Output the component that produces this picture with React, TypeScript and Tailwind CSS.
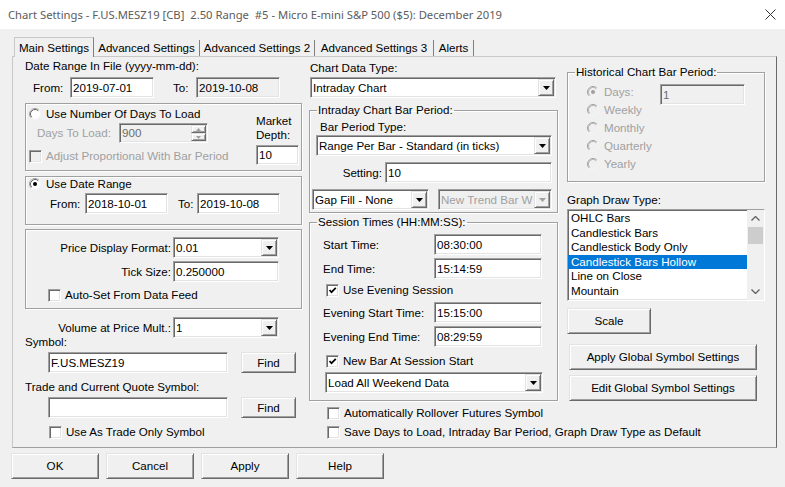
import React from 'react';

const sunken =
  'border border-t-[#a0a0a0] border-l-[#a0a0a0] border-r-white border-b-white shadow-[inset_1px_1px_0_#696969,inset_-1px_-1px_0_#e3e3e3]';
const raised =
  'border border-t-[#e3e3e3] border-l-[#e3e3e3] border-r-[#696969] border-b-[#696969] shadow-[inset_1px_1px_0_#ffffff,inset_-1px_-1px_0_#a0a0a0]';
const etched = 'border border-[#a0a0a0] shadow-[inset_1px_1px_0_#ffffff,1px_1px_0_#ffffff]';

const TextBox: React.FC<{ value?: string; className?: string; gray?: boolean; dim?: boolean }> = ({
  value = '',
  className = '',
  gray = false,
  dim = false,
}) => (
  <div
    className={`${sunken} ${gray ? 'bg-[#f0f0f0]' : 'bg-white'} ${dim ? 'text-[#6d6d6d]' : ''} flex items-center pl-[2px] shrink-0 whitespace-nowrap overflow-hidden ${className}`}
  >
    {value}
  </div>
);

const Arrow: React.FC<{ gray?: boolean }> = ({ gray }) => (
  <svg width="7" height="4" viewBox="0 0 7 4">
    <path d="M0 0 H7 L3.5 4 Z" fill={gray ? '#a0a0a0' : '#000000'} />
  </svg>
);

const Combo: React.FC<{ value: string; className?: string; disabled?: boolean }> = ({
  value,
  className = '',
  disabled = false,
}) => (
  <div
    className={`${sunken} ${disabled ? 'bg-[#f0f0f0] text-[#a0a0a0]' : 'bg-white'} flex items-stretch p-[1px] shrink-0 ${className}`}
  >
    <div className="flex-1 flex items-center pl-[1px] whitespace-nowrap overflow-hidden">{value}</div>
    <div className={`w-[16px] shrink-0 bg-[#f0f0f0] ${raised} flex items-center justify-center`}>
      <Arrow gray={disabled} />
    </div>
  </div>
);

const Btn: React.FC<{ label: string; className?: string }> = ({ label, className = '' }) => (
  <div className={`${raised} bg-[#f0f0f0] flex items-center justify-center shrink-0 whitespace-nowrap ${className}`}>
    {label}
  </div>
);

const Check: React.FC<{ label: string; checked?: boolean; disabled?: boolean; className?: string }> = ({
  label,
  checked = false,
  disabled = false,
  className = '',
}) => (
  <div className={`flex items-center h-[14px] ${className}`}>
    <div
      className={`w-[13px] h-[13px] shrink-0 ${sunken} ${disabled ? 'bg-[#f0f0f0]' : 'bg-white'} flex items-center justify-center`}
    >
      {checked && (
        <svg width="9" height="9" viewBox="0 0 9 9">
          <path d="M1.5 4 L3.5 6.2 L7.8 1.8" stroke="#000000" strokeWidth="1.7" fill="none" />
        </svg>
      )}
    </div>
    <span className={`ml-[4px] whitespace-nowrap ${disabled ? 'text-[#a0a0a0]' : ''}`}>{label}</span>
  </div>
);

const Radio: React.FC<{ label: string; checked?: boolean; disabled?: boolean; className?: string }> = ({
  label,
  checked = false,
  disabled = false,
  className = '',
}) => (
  <div className={`flex items-center ${className}`}>
    <svg width="12" height="12" viewBox="0 0 12 12" className="shrink-0">
      <circle cx="6" cy="6" r="5.5" fill={disabled ? '#f0f0f0' : '#ffffff'} />
      <path d="M2.11 9.89 A5.5 5.5 0 0 1 9.89 2.11" stroke="#a0a0a0" fill="none" />
      <path d="M9.89 2.11 A5.5 5.5 0 0 1 2.11 9.89" stroke="#f4f4f4" fill="none" />
      <path d="M2.82 9.18 A4.5 4.5 0 0 1 9.18 2.82" stroke={disabled ? '#b8b8b8' : '#696969'} fill="none" />
      {checked && <circle cx="6" cy="6" r="2" fill={disabled ? '#a0a0a0' : '#000000'} />}
    </svg>
    <span className={`ml-[5px] whitespace-nowrap ${disabled ? 'text-[#a0a0a0]' : ''}`}>{label}</span>
  </div>
);

const Chevron: React.FC<{ down?: boolean }> = ({ down }) => (
  <svg width="9" height="5" viewBox="0 0 9 5">
    <path
      d={down ? 'M0.5 0.5 L4.5 4.5 L8.5 0.5' : 'M0.5 4.5 L4.5 0.5 L8.5 4.5'}
      stroke="#606060"
      strokeWidth="1.3"
      fill="none"
    />
  </svg>
);

const Spin: React.FC<{ up?: boolean }> = ({ up }) => (
  <div className={`flex-1 ${raised} bg-[#f0f0f0] flex items-center justify-center`}>
    <svg width="5" height="3" viewBox="0 0 5 3">
      <path d={up ? 'M0 3 L2.5 0 L5 3 Z' : 'M0 0 L2.5 3 L5 0 Z'} fill="#a0a0a0" />
    </svg>
  </div>
);

const drawTypes = [
  'OHLC Bars',
  'Candlestick Bars',
  'Candlestick Body Only',
  'Candlestick Bars Hollow',
  'Line on Close',
  'Mountain',
];

const tabs = [
  { label: 'Main Settings', w: 'w-[80px]' },
  { label: 'Advanced Settings', w: 'w-[106px]' },
  { label: 'Advanced Settings 2', w: 'w-[115px]' },
  { label: 'Advanced Settings 3', w: 'w-[119px]' },
  { label: 'Alerts', w: 'w-[40px]' },
];

function LeftColumn() {
  return (
    <div className="ml-[12px] w-[277px] flex flex-col items-start shrink-0">
      <div className="mt-[2px] h-[14px] whitespace-nowrap">Date Range In File (yyyy-mm-dd):</div>
      <div className="mt-[4px] flex items-center h-[21px]">
        <span className="ml-[8px] w-[37px]">From:</span>
        <TextBox value="2019-07-01" className="w-[84px] h-[21px]" />
        <span className="ml-[19px] w-[23px]">To:</span>
        <TextBox value="2019-10-08" gray className="w-[84px] h-[21px]" />
      </div>

      <div className={`${etched} mt-[5px] w-[277px] h-[68px] flex items-start`}>
        <div className="ml-[3px] flex flex-col items-start">
          <Radio label="Use Number Of Days To Load" className="mt-[3px] h-[14px]" />
          <div className="mt-[2px] flex items-center h-[20px]">
            <span className="ml-[8px] w-[82px] text-[#a0a0a0]">Days To Load:</span>
            <div className={`${sunken} bg-[#f0f0f0] flex items-stretch w-[89px] h-[20px] p-[1px]`}>
              <div className="flex-1 flex items-center pl-[1px] text-[#6d6d6d]">900</div>
              <div className="w-[15px] flex flex-col">
                <Spin up />
                <Spin />
              </div>
            </div>
          </div>
          <Check label="Adjust Proportional With Bar Period" disabled className="mt-[6px]" />
        </div>
        <div className="ml-auto mr-[2px] mt-[10px] w-[43px] flex flex-col">
          <div className="h-[14px]">Market</div>
          <div className="h-[14px]">Depth:</div>
          <TextBox value="10" className="mt-[3px] w-[43px] h-[20px]" />
        </div>
      </div>

      <div className={`${etched} mt-[5px] w-[277px] h-[49px] flex flex-col items-start`}>
        <Radio label="Use Date Range" checked className="ml-[3px] h-[14px]" />
        <div className="mt-[2px] flex items-center h-[21px]">
          <span className="ml-[24px] w-[35px]">From:</span>
          <TextBox value="2018-10-01" className="w-[83px] h-[21px]" />
          <span className="ml-[10px] w-[19px]">To:</span>
          <TextBox value="2019-10-08" className="w-[83px] h-[21px]" />
        </div>
      </div>

      <div className={`${etched} mt-[4px] w-[277px] h-[80px] flex flex-col items-start`}>
        <div className="mt-[7px] flex items-center h-[21px]">
          <span className="w-[145px] text-right whitespace-nowrap">Price Display Format:</span>
          <Combo value="0.01" className="ml-[2px] w-[106px] h-[21px]" />
        </div>
        <div className="mt-[3px] flex items-center h-[21px]">
          <span className="w-[145px] text-right">Tick Size:</span>
          <TextBox value="0.250000" className="ml-[2px] w-[106px] h-[21px]" />
        </div>
        <Check label="Auto-Set From Data Feed" className="mt-[6px] ml-[22px]" />
      </div>

      <div className="mt-[8px] flex items-center h-[21px]">
        <span className="w-[146px] text-right whitespace-nowrap">Volume at Price Mult.:</span>
        <Combo value="1" className="ml-[2px] w-[106px] h-[21px]" />
      </div>
      <div className="mt-[-3px] h-[14px]">Symbol:</div>
      <div className="mt-[3px] flex items-center h-[21px]">
        <TextBox value="F.US.MESZ19" className="ml-[23px] w-[180px] h-[21px]" />
        <Btn label="Find" className="ml-[13px] w-[55px] h-[21px]" />
      </div>
      <div className="mt-[7px] h-[14px] whitespace-nowrap">Trade and Current Quote Symbol:</div>
      <div className="mt-[3px] flex items-center h-[21px]">
        <TextBox className="ml-[23px] w-[180px] h-[21px]" />
        <Btn label="Find" className="ml-[13px] w-[55px] h-[21px]" />
      </div>
      <Check label="Use As Trade Only Symbol" className="mt-[7px] ml-[24px]" />
    </div>
  );
}

function MiddleColumn() {
  return (
    <div className="ml-[7px] w-[249px] flex flex-col items-start shrink-0">
      <div className="mt-[4px] ml-[1px] h-[14px]">Chart Data Type:</div>
      <Combo value="Intraday Chart" className="mt-[2px] ml-[1px] w-[246px] h-[21px]" />

      <fieldset className={`${etched} mt-[5px] w-[249px] h-[110px]`}>
        <legend className="ml-[7px] px-[1px] leading-[14px]">Intraday Chart Bar Period:</legend>
        <div className="flex flex-col items-start">
          <div className="mt-[3px] ml-[10px] h-[14px]">Bar Period Type:</div>
          <Combo value="Range Per Bar - Standard (in ticks)" className="mt-[1px] ml-[6px] w-[236px] h-[21px]" />
          <div className="mt-[6px] flex items-center h-[21px]">
            <span className="w-[72px] text-right">Setting:</span>
            <TextBox value="10" className="ml-[3px] w-[167px] h-[21px]" />
          </div>
          <div className="mt-[6px] flex items-center h-[21px]">
            <Combo value="Gap Fill - None" className="ml-[2px] w-[117px] h-[21px]" />
            <Combo value="New Trend Bar W" disabled className="ml-[9px] w-[114px] h-[21px]" />
          </div>
        </div>
      </fieldset>

      <fieldset className={`${etched} mt-[2px] w-[249px] h-[186px]`}>
        <legend className="ml-[7px] px-[1px] leading-[14px]">Session Times (HH:MM:SS):</legend>
        <div className="flex flex-col items-start">
          <div className="mt-[5px] flex items-center h-[21px]">
            <span className="ml-[13px] w-[111px]">Start Time:</span>
            <TextBox value="08:30:00" className="w-[108px] h-[21px]" />
          </div>
          <div className="mt-[3px] flex items-center h-[21px]">
            <span className="ml-[13px] w-[111px]">End Time:</span>
            <TextBox value="15:14:59" className="w-[108px] h-[21px]" />
          </div>
          <Check label="Use Evening Session" checked className="mt-[4px] ml-[16px]" />
          <div className="mt-[5px] flex items-center h-[21px]">
            <span className="ml-[13px] w-[111px] whitespace-nowrap">Evening Start Time:</span>
            <TextBox value="15:15:00" className="w-[108px] h-[21px]" />
          </div>
          <div className="mt-[3px] flex items-center h-[21px]">
            <span className="ml-[13px] w-[111px] whitespace-nowrap">Evening End Time:</span>
            <TextBox value="08:29:59" className="w-[108px] h-[21px]" />
          </div>
          <Check label="New Bar At Session Start" checked className="mt-[7px] ml-[16px]" />
          <Combo value="Load All Weekend Data" className="mt-[4px] ml-[15px] w-[218px] h-[21px]" />
        </div>
      </fieldset>

      <Check label="Automatically Rollover Futures Symbol" className="mt-[5px] ml-[18px]" />
      <Check
        label="Save Days to Load, Intraday Bar Period, Graph Draw Type as Default"
        className="mt-[5px] ml-[18px]"
      />
    </div>
  );
}

function RightColumn() {
  return (
    <div className="ml-[9px] w-[198px] flex flex-col items-start shrink-0">
      <fieldset className={`${etched} mt-[8px] w-[198px] h-[117px]`}>
        <legend className="ml-[7px] px-[1px] leading-[14px]">Historical Chart Bar Period:</legend>
        <div className="flex flex-col items-start">
          <div className="mt-[4px] flex items-start h-[18px]">
            <Radio label="Days:" checked disabled className="ml-[19px] w-[73px] h-[18px]" />
            <TextBox value="1" gray dim className="mt-[1px] w-[85px] h-[21px]" />
          </div>
          <Radio label="Weekly" disabled className="ml-[19px] h-[18px]" />
          <Radio label="Monthly" disabled className="ml-[19px] h-[18px]" />
          <Radio label="Quarterly" disabled className="ml-[19px] h-[18px]" />
          <Radio label="Yearly" disabled className="ml-[19px] h-[18px]" />
        </div>
      </fieldset>

      <div className="mt-[11px] h-[14px]">Graph Draw Type:</div>
      <div className={`${sunken} bg-white mt-[2px] w-[198px] h-[92px] flex`}>
        <div className="flex-1 pt-[1px]">
          {drawTypes.map((t) => (
            <div
              key={t}
              className={`h-[14.5px] leading-[14.5px] pl-[3px] whitespace-nowrap ${
                t === 'Candlestick Bars Hollow' ? 'bg-[#0078d7] text-white' : ''
              }`}
            >
              {t}
            </div>
          ))}
        </div>
        <div className="w-[17px] bg-[#f0f0f0] flex flex-col">
          <div className="h-[17px] flex items-center justify-center">
            <Chevron />
          </div>
          <div className="h-[17px] mx-[1px] bg-[#cdcdcd]" />
          <div className="flex-1" />
          <div className="h-[17px] flex items-center justify-center">
            <Chevron down />
          </div>
        </div>
      </div>

      <Btn label="Scale" className="mt-[7px] w-[84px] h-[26px]" />
      <Btn label="Apply Global Symbol Settings" className="mt-[10px] ml-[2px] w-[188px] h-[26px]" />
      <Btn label="Edit Global Symbol Settings" className="mt-[5px] ml-[2px] w-[188px] h-[26px]" />
    </div>
  );
}

export default function App() {
  return (
    <div className="w-[785px] h-[487px] overflow-hidden bg-[#f0f0f0] text-black text-[11.6px] leading-[14px] font-['Liberation_Sans',Arial,sans-serif]">
      <div className="h-[29px] bg-white flex items-center justify-between pl-[8px] pr-[9px]">
        <span className="whitespace-pre text-[#5c5c5c] text-[11.25px] font-['Noto_Sans',sans-serif]">
          Chart Settings - F.US.MESZ19 [CB]  2.50 Range  #5 - Micro E-mini S&amp;P 500 ($5): December 2019
        </span>
        <svg width="11" height="11" viewBox="0 0 11 11">
          <path d="M0.5 0.5 L10.5 10.5 M10.5 0.5 L0.5 10.5" stroke="#333333" strokeWidth="1" />
        </svg>
      </div>

      <div className="mt-[8px] ml-[14px] h-[19px] flex items-end">
        {tabs.map((t, i) =>
          i === 0 ? (
            <div
              key={t.label}
              className={`${t.w} h-[20px] -mb-[1px] relative z-10 bg-[#f0f0f0] border-t border-l border-r border-t-[#c8c8c8] border-l-[#c8c8c8] border-r-[#808080] flex items-center justify-center whitespace-nowrap`}
            >
              {t.label}
            </div>
          ) : (
            <div
              key={t.label}
              className={`${t.w} h-[16px] border-r border-r-[#808080] flex items-center justify-center whitespace-nowrap`}
            >
              {t.label}
            </div>
          ),
        )}
      </div>

      <div className="ml-[12px] w-[765px] h-[392px] border border-t-[#c8c8c8] border-l-[#c8c8c8] border-r-[#696969] border-b-[#a0a0a0] flex items-start">
        <LeftColumn />
        <MiddleColumn />
        <RightColumn />
      </div>

      <div className="mt-[5px] ml-[11px] flex gap-[7px]">
        <Btn label="OK" className="w-[88px] h-[26px]" />
        <Btn label="Cancel" className="w-[88px] h-[26px]" />
        <Btn label="Apply" className="w-[88px] h-[26px]" />
        <Btn label="Help" className="w-[88px] h-[26px]" />
      </div>
    </div>
  );
}
